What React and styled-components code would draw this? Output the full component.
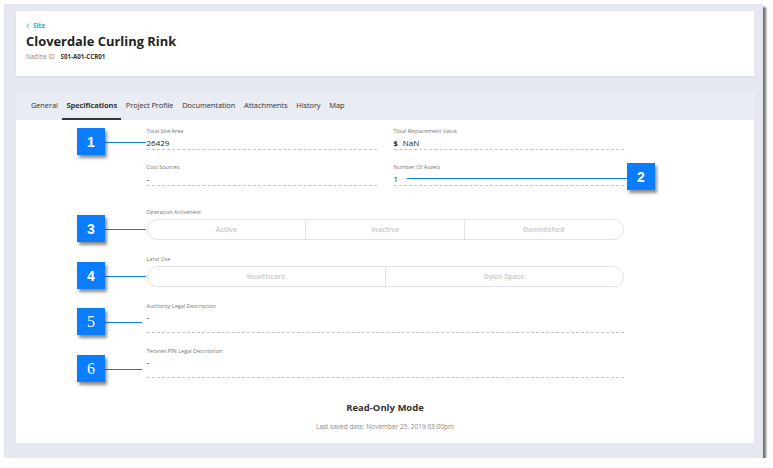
import React from "react";
import styled, { createGlobalStyle } from "styled-components";

const GlobalStyle = createGlobalStyle`
  html, body {
    margin: 0;
    padding: 0;
    background: #ffffff;
    font-family: "Open Sans", "Noto Sans", sans-serif;
  }
`;

const Frame = styled.div`
  margin: 4px 0 0 4px;
  width: 759px;
  height: 454px;
  box-sizing: border-box;
  padding: 7px 9px 0 12px;
  background: #e5e8f0;
  box-shadow: 3px 3px 2px rgba(0, 0, 0, 0.55);
  display: flex;
  flex-direction: column;
  gap: 16px;
`;

const HeaderCard = styled.div`
  background: #ffffff;
  padding: 11px 10px 15px;
  box-shadow: 0 1px 1px rgba(0, 0, 0, 0.06);
`;

const BackLink = styled.div`
  color: #27b3a6;
  font-size: 6.5px;
  font-weight: 700;
  line-height: 8px;
  display: flex;
  align-items: center;
  gap: 3px;
`;

const Title = styled.h1`
  margin: 3px 0 3px;
  font-size: 12.9px;
  line-height: 17px;
  font-weight: 700;
  color: #222;
`;

const IdRow = styled.div`
  font-size: 6.2px;
  line-height: 8px;
  color: #888;
  display: flex;
  gap: 6px;

  b {
    color: #333;
    font-weight: 700;
  }
`;

const Panel = styled.div`
  display: flex;
  flex-direction: column;
`;

const TabBar = styled.div`
  height: 28px;
  background: #e9ecf3;
  display: flex;
  align-items: stretch;
  padding-left: 10.5px;
`;

const Tab = styled.div`
  padding: 0 4.4px;
  font-size: 7.5px;
  letter-spacing: -0.1px;
  color: #333;
  font-weight: ${(p) => (p.$active ? 700 : 400)};
  display: flex;
  align-items: center;
  border-bottom: 2px solid ${(p) => (p.$active ? "#333" : "transparent")};
  box-sizing: border-box;
`;

const Content = styled.div`
  position: relative;
  background: #ffffff;
  height: 323px;
  display: flex;
  flex-direction: column;
  align-items: center;
  padding-top: 8px;
  box-sizing: border-box;
`;

const Form = styled.div`
  width: 477px;
  display: flex;
  flex-direction: column;
`;

const TwoCol = styled.div`
  display: grid;
  grid-template-columns: 230px 230px;
  column-gap: 17px;
  row-gap: 14px;
  margin-bottom: 23px;
`;

const Field = styled.div`
  display: flex;
  flex-direction: column;
  margin-bottom: ${(p) => p.$mb || 0}px;
`;

const Label = styled.div`
  font-size: 5.5px;
  line-height: 7px;
  color: #777;
  margin-bottom: ${(p) => p.$mb || 2}px;
`;

const Value = styled.div`
  font-size: 8px;
  line-height: ${(p) => (p.$tall ? "10px" : "12px")};
  height: ${(p) => (p.$tall ? "20px" : "12px")};
  color: #222;
  border-bottom: 1px dashed #c4c4c4;
  display: flex;
  align-items: ${(p) => (p.$tall ? "flex-start" : "center")};
  gap: 5px;

  b {
    font-weight: 700;
    font-size: 7.5px;
  }
`;

const Segmented = styled.div`
  display: flex;
  height: 21px;
  box-sizing: border-box;
  border: 1px solid #e2e2e2;
  border-radius: 11px;
  overflow: hidden;
`;

const Segment = styled.div`
  flex: 1;
  display: flex;
  align-items: center;
  justify-content: center;
  font-size: 7px;
  font-weight: 700;
  color: #cfcfcf;

  & + & {
    border-left: 1px solid #e2e2e2;
  }
`;

const Footer = styled.div`
  margin-top: 23px;
  display: flex;
  flex-direction: column;
  align-items: center;
`;

const ModeTitle = styled.div`
  font-size: 9.5px;
  line-height: 13px;
  font-weight: 700;
  color: #333;
`;

const SavedText = styled.div`
  margin-top: 8px;
  font-size: 6.5px;
  line-height: 9px;
  color: #888;
`;

const Callout = styled.div`
  position: absolute;
  left: ${(p) => p.$x}px;
  top: ${(p) => p.$y}px;
  width: 28px;
  height: 27px;
  background: #0a7dfd;
  color: #ffffff;
  display: flex;
  align-items: center;
  justify-content: center;
  font-family: ${(p) =>
    p.$serif ? '"Liberation Serif", serif' : '"Liberation Sans", sans-serif'};
  font-weight: ${(p) => (p.$serif ? 400 : 700)};
  font-size: ${(p) => (p.$serif ? "16px" : "14px")};
  box-shadow: 2px 3px 3px rgba(0, 0, 0, 0.45);
  z-index: 2;
`;

const Leader = styled.div`
  position: absolute;
  left: ${(p) => p.$x}px;
  top: ${(p) => p.$y}px;
  width: ${(p) => p.$w}px;
  height: 1px;
  background: #0a7dfd;
  z-index: 1;
`;

const callouts = [
  { n: 1, x: 61, y: 8, lx: 89, ly: 22, lw: 41 },
  { n: 2, x: 611, y: 43, lx: 391, ly: 58, lw: 220 },
  { n: 3, x: 61, y: 95, lx: 89, ly: 109, lw: 41 },
  { n: 4, x: 61, y: 142, lx: 89, ly: 156, lw: 41 },
  { n: 5, x: 61, y: 188, lx: 89, ly: 202, lw: 37, serif: true },
  { n: 6, x: 61, y: 235, lx: 89, ly: 249, lw: 37, serif: true },
];

const tabs = [
  "General",
  "Specifications",
  "Project Profile",
  "Documentation",
  "Attachments",
  "History",
  "Map",
];

export default function App() {
  return (
    <>
      <GlobalStyle />
      <Frame>
        <HeaderCard>
          <BackLink>
            <svg width="4" height="6" viewBox="0 0 4 6">
              <path d="M3 0.5 L0.8 3 L3 5.5" fill="none" stroke="#27b3a6" strokeWidth="0.9" />
            </svg>
            Site
          </BackLink>
          <Title>Cloverdale Curling Rink</Title>
          <IdRow>
            Nadine ID <b>S01-A01-CCR01</b>
          </IdRow>
        </HeaderCard>

        <Panel>
          <TabBar>
            {tabs.map((t) => (
              <Tab key={t} $active={t === "Specifications"}>
                {t}
              </Tab>
            ))}
          </TabBar>
          <Content>
            <Form>
              <TwoCol>
                <Field>
                  <Label>Total Site Area</Label>
                  <Value>26429</Value>
                </Field>
                <Field>
                  <Label>Total Replacement Value</Label>
                  <Value>
                    <b>$</b> NaN
                  </Value>
                </Field>
                <Field>
                  <Label>Cost Sources</Label>
                  <Value>-</Value>
                </Field>
                <Field>
                  <Label>Number Of Assets</Label>
                  <Value>1</Value>
                </Field>
              </TwoCol>

              <Field $mb={16}>
                <Label $mb={3}>Operation Activeness</Label>
                <Segmented>
                  <Segment>Active</Segment>
                  <Segment>Inactive</Segment>
                  <Segment>Demolished</Segment>
                </Segmented>
              </Field>

              <Field $mb={16}>
                <Label $mb={3}>Land Use</Label>
                <Segmented>
                  <Segment>Healthcare</Segment>
                  <Segment>Open Space</Segment>
                </Segmented>
              </Field>

              <Field $mb={15}>
                <Label>Authority Legal Description</Label>
                <Value $tall>-</Value>
              </Field>

              <Field>
                <Label>Teranet PIN Legal Description</Label>
                <Value $tall>-</Value>
              </Field>
            </Form>

            <Footer>
              <ModeTitle>Read-Only Mode</ModeTitle>
              <SavedText>Last saved date: November 25, 2019 03:00pm</SavedText>
            </Footer>

            {callouts.map((c) => (
              <React.Fragment key={c.n}>
                <Callout $x={c.x} $y={c.y} $serif={c.serif}>
                  {c.n}
                </Callout>
                <Leader $x={c.lx} $y={c.ly} $w={c.lw} />
              </React.Fragment>
            ))}
          </Content>
        </Panel>
      </Frame>
    </>
  );
}
